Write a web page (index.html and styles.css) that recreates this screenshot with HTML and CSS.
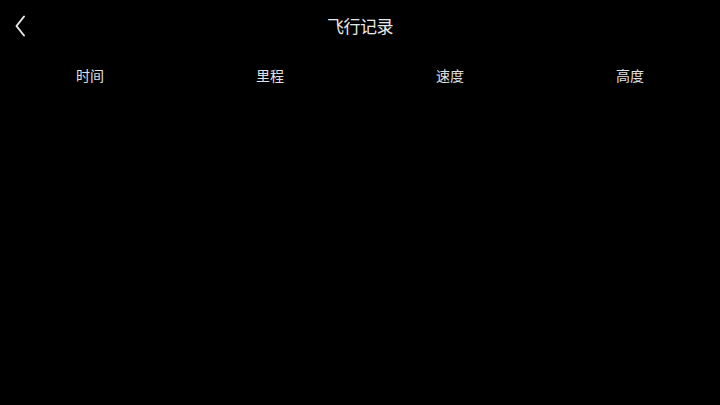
FILE: index.html
```html
<!DOCTYPE html>
<html>
<head>
<meta charset="utf-8">
<link rel="stylesheet" href="styles.css">
</head>
<body>
<div class="page">
  <header class="topbar">
    <div class="back">
      <svg width="12" height="22" viewBox="0 0 12 22"><path d="M10 1.5 L2.5 11 L10 20.5" fill="none" stroke="#e6e6e6" stroke-width="2" stroke-linecap="round" stroke-linejoin="round"/></svg>
    </div>
    <div class="title">飞行记录</div>
  </header>
  <div class="cols">
    <div class="col">时间</div>
    <div class="col">里程</div>
    <div class="col">速度</div>
    <div class="col">高度</div>
  </div>
</div>
</body>
</html>
```
FILE: styles.css
```css
html, body {
  margin: 0;
  padding: 0;
  background: #000;
}
.page {
  width: 720px;
  height: 405px;
  background: #000;
  color: #e8e8e8;
  font-family: "Noto Sans CJK SC", "Noto Sans", sans-serif;
  overflow: hidden;
}
.topbar {
  position: relative;
  height: 52px;
  display: flex;
  align-items: center;
  justify-content: center;
}
.back {
  position: absolute;
  left: 14px;
  top: 15px;
  width: 12px;
  height: 22px;
  display: flex;
}
.title {
  font-size: 17px;
  line-height: 20px;
  letter-spacing: -0.5px;
}
.cols {
  display: grid;
  grid-template-columns: repeat(4, 1fr);
  height: 46px;
  align-items: center;
}
.col {
  text-align: center;
  font-size: 14px;
  line-height: 18px;
  color: #e0e0e0;
}
```
